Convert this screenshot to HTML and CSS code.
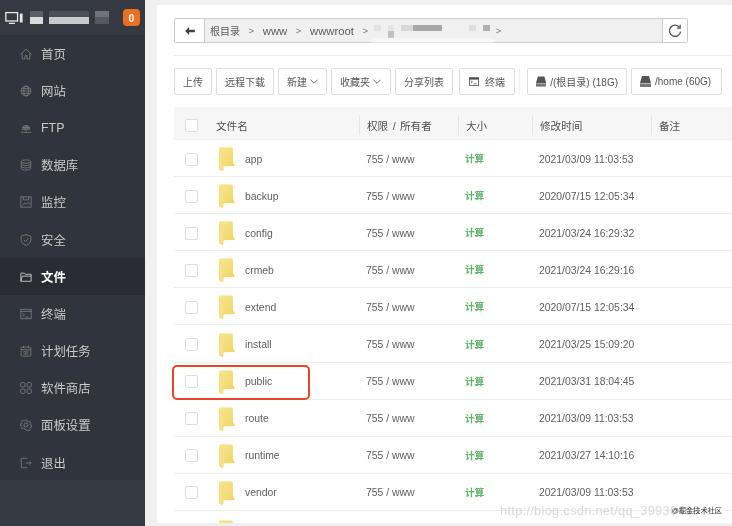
FILE: index.html
```html
<!DOCTYPE html>
<html lang="zh-CN">
<head>
<meta charset="utf-8">
<title>文件</title>
<link rel="stylesheet" href="styles.css">
</head>
<body>
<svg class="defs" width="0" height="0" aria-hidden="true">
  <defs>
    <linearGradient id="fg" x1="0" y1="0" x2="1" y2="1">
      <stop offset="0" stop-color="#f9e68f"/><stop offset="1" stop-color="#eed262"/>
    </linearGradient>
    <symbol id="folder" viewBox="0 0 16 24">
      <path d="M0 2 Q0 .3 2 .3 L12.500 .5 Q13.700 .6 13.800 1.800 L14 15 L16 19 L4.500 19.300 L4.300 22.600 Q4.200 24 2.600 23.600 L1 23 Q0 22.700 0 21.500Z" fill="url(#fg)"/>
      <path d="M4.400 19.300 L4.200 5 Q3.500 3.800 0 2 V21.500 Q0 22.700 1 23 L2.600 23.600 Q4.200 24 4.300 22.600Z" fill="#f7df85"/>
    </symbol>
  </defs>
</svg>
<div class="app">
  <aside class="sidebar">
    <header class="side-head">
      <svg class="host-icon" width="19" height="14" viewBox="0 0 20 15" fill="none" stroke="#e8e8e8" stroke-width="1.400"><rect x=".7" y="1.700" width="12.600" height="9"/><path d="M4 13.200h6.500"/><rect x="15.700" y="2.800" width="3" height="9.500" fill="#e8e8e8" stroke="none"/></svg>
      <div class="mosaic"><i class="m1"></i><i class="m2"></i><i class="m3"></i></div>
      <span class="badge">0</span>
    </header>
    <nav class="menu">
      <a class="item"><svg viewBox="0 0 14 14"><path d="M.6 7.400 7 1.200l6.400 6.200M2.600 6v6.800h3.200V9h2.400v3.800h3.200V6"/></svg>首页</a>
      <a class="item"><svg viewBox="0 0 14 14"><circle cx="7" cy="7" r="5.700"/><ellipse cx="7" cy="7" rx="2.600" ry="5.700"/><path d="M1.300 7h11.400M2 4.200h10M2 9.800h10"/></svg>网站</a>
      <a class="item"><svg viewBox="0 0 14 14"><path d="M2.500 8.500a4.500 4.500 0 0 1 9 0zM7 4V8.500M5 8.500q-1-2.500 2-4.500 3 2 2 4.500M2.700 6.500h8.600M7 8.500v3M1 12h12"/></svg>FTP</a>
      <a class="item"><svg viewBox="0 0 14 14"><ellipse cx="7" cy="3" rx="5.500" ry="2"/><path d="M1.500 3v8c0 1.100 2.500 2 5.500 2s5.500-.9 5.500-2V3M1.500 5.700c0 1.100 2.500 2 5.500 2s5.500-.9 5.500-2M1.500 8.400c0 1.100 2.500 2 5.500 2s5.500-.9 5.500-2"/></svg>数据库</a>
      <a class="item"><svg viewBox="0 0 14 14"><rect x="1" y="1" width="12" height="12"/><path d="M4 1v3.500h6V1M3 11l2.500-3 2 1.500L10 7l1.500 3"/></svg>监控</a>
      <a class="item"><svg viewBox="0 0 14 14"><path d="M7 .8 12.700 2.500V7c0 3-2.500 5.200-5.700 6.300C3.800 12.200 1.300 10 1.300 7V2.500zM4.500 6.800 6.500 8.800 9.800 5"/></svg>安全</a>
      <a class="item active"><svg viewBox="0 0 14 14"><path d="M1 2.500h4l1.200 1.300H13V12H1zM1 12l1.500-6H13"/></svg>文件</a>
      <a class="item"><svg viewBox="0 0 14 14"><rect x="1" y="1.500" width="12" height="11"/><path d="M1 4h12M3 6l2.200 2L3 10M6.500 10.500H10"/></svg>终端</a>
      <a class="item"><svg viewBox="0 0 14 14"><rect x="1.300" y="2.500" width="11.400" height="10.500" rx="1.500"/><path d="M1.300 5.500h11.400M4 1v2.500M10 1v2.500M4 8h6M4 10.500h6M7 8v2.500"/></svg>计划任务</a>
      <a class="item"><svg viewBox="0 0 14 14"><rect x=".8" y=".8" width="5" height="5" rx="1.200"/><rect x="8.200" y=".8" width="5" height="5" rx="1.200"/><rect x=".8" y="8.200" width="5" height="5" rx="1.200"/><rect x="8.200" y="8.200" width="5" height="5" rx="1.200"/></svg>软件商店</a>
      <a class="item"><svg viewBox="0 0 14 14"><circle cx="7" cy="7" r="2.300"/><path d="M6 1h2l.4 1.700 1.500.7 1.600-.8 1.300 1.500-1 1.400.5 1.500 1.700.5v2l-1.700.4-.7 1.500.9 1.500-1.500 1.300-1.400-1-1.500.5L8 13H6l-.4-1.500-1.500-.6-1.500.9-1.300-1.500 1-1.400-.6-1.500L0 7.800v-2l1.700-.3.600-1.500-.9-1.500L3 1.200l1.400 1 1.200-.5z" transform="translate(.3 .2) scale(.96)"/></svg>面板设置</a>
      <a class="item"><svg viewBox="0 0 14 14"><path d="M8.500 1.500H1.500v11h7M6.500 7H13M10.800 4.800 13 7l-2.200 2.200"/></svg>退出</a>
    </nav>
  </aside>
  <main class="content">
    <section class="panel">
      <div class="pathbar">
        <button class="back"><svg width="10" height="8" viewBox="0 0 11 9"><path d="M0 4.500 4.500 0v3H11v3H4.500v3z" fill="#444"/></svg></button>
        <div class="crumbs">
          <span class="cjk">根目录</span><b>&gt;</b><span>www</span><b>&gt;</b><span>wwwroot</span><b>&gt;</b>
          <div class="smudge"><i class="s1"></i><i class="s2"></i><i class="s3"></i><i class="s4"></i><i class="s5"></i></div>
          <b class="lastb">&gt;</b>
        </div>
        <button class="refresh"><svg width="14" height="14" viewBox="0 0 13 13" fill="none" stroke="#555" stroke-width="1.200"><path d="M10.800 3.300A5.200 5.200 0 1 0 11.700 7"/><path d="M11.300 .8v3H8.300"/></svg></button>
      </div>
      <div class="toolbar">
        <button class="btn">上传</button>
        <button class="btn">远程下载</button>
        <button class="btn">新建<svg class="caret" viewBox="0 0 9 5"><path d="M.5.500 4.500 4.500 8.500.5"/></svg></button>
        <button class="btn fav">收藏夹<svg class="caret" viewBox="0 0 9 5"><path d="M.5.500 4.500 4.500 8.500.5"/></svg></button>
        <button class="btn">分享列表</button>
        <button class="btn term"><svg width="13" height="11" viewBox="0 0 13 11" fill="none" stroke="#444"><rect x=".5" y=".5" width="12" height="10"/><path d="M.5 2h12" stroke-width="2"/><path d="M2.500 4.500 4.500 6l-2 1.500M6 8.500h3.500"/></svg>终端</button>
        <span class="sep"></span>
        <button class="btn disk root"><svg width="11" height="11" viewBox="0 0 11 11"><path d="M2 0h7l2 7H0z" fill="#555"/><rect y="7.500" width="11" height="3.500" fill="#777"/></svg>/(根目录) (18G)</button>
        <button class="btn disk home"><svg width="11" height="11" viewBox="0 0 11 11"><path d="M2 0h7l2 7H0z" fill="#555"/><rect y="7.500" width="11" height="3.500" fill="#777"/></svg>/home (60G)</button>
      </div>
      <div class="table">
        <div class="thead">
          <div class="namecell"><span class="check"></span><span class="title">文件名</span></div>
          <div class="col owner">权限 / 所有者</div>
          <div class="col">大小</div>
          <div class="col">修改时间</div>
          <div class="col">备注</div>
        </div>
        <div class="row"><div class="namecell"><span class="check"></span><svg class="folder"><use href="#folder"/></svg><span>app</span></div><div class="cell">755 / www</div><div class="cell calc">计算</div><div class="cell">2021/03/09 11:03:53</div><div></div></div>
        <div class="row"><div class="namecell"><span class="check"></span><svg class="folder"><use href="#folder"/></svg><span>backup</span></div><div class="cell">755 / www</div><div class="cell calc">计算</div><div class="cell">2020/07/15 12:05:34</div><div></div></div>
        <div class="row"><div class="namecell"><span class="check"></span><svg class="folder"><use href="#folder"/></svg><span>config</span></div><div class="cell">755 / www</div><div class="cell calc">计算</div><div class="cell">2021/03/24 16:29:32</div><div></div></div>
        <div class="row"><div class="namecell"><span class="check"></span><svg class="folder"><use href="#folder"/></svg><span>crmeb</span></div><div class="cell">755 / www</div><div class="cell calc">计算</div><div class="cell">2021/03/24 16:29:16</div><div></div></div>
        <div class="row"><div class="namecell"><span class="check"></span><svg class="folder"><use href="#folder"/></svg><span>extend</span></div><div class="cell">755 / www</div><div class="cell calc">计算</div><div class="cell">2020/07/15 12:05:34</div><div></div></div>
        <div class="row"><div class="namecell"><span class="check"></span><svg class="folder"><use href="#folder"/></svg><span>install</span></div><div class="cell">755 / www</div><div class="cell calc">计算</div><div class="cell">2021/03/25 15:09:20</div><div></div></div>
        <div class="row highlighted"><div class="namecell"><span class="check"></span><svg class="folder"><use href="#folder"/></svg><span>public</span></div><div class="cell">755 / www</div><div class="cell calc">计算</div><div class="cell">2021/03/31 18:04:45</div><div></div></div>
        <div class="row"><div class="namecell"><span class="check"></span><svg class="folder"><use href="#folder"/></svg><span>route</span></div><div class="cell">755 / www</div><div class="cell calc">计算</div><div class="cell">2021/03/09 11:03:53</div><div></div></div>
        <div class="row"><div class="namecell"><span class="check"></span><svg class="folder"><use href="#folder"/></svg><span>runtime</span></div><div class="cell">755 / www</div><div class="cell calc">计算</div><div class="cell">2021/03/27 14:10:16</div><div></div></div>
        <div class="row"><div class="namecell"><span class="check"></span><svg class="folder"><use href="#folder"/></svg><span>vendor</span></div><div class="cell">755 / www</div><div class="cell calc">计算</div><div class="cell">2021/03/09 11:03:53</div><div></div></div>
        <div class="clipped"><svg class="folder"><use href="#folder"/></svg></div>
      </div>
    </section>
    <div class="watermark"><span class="wm-url">http://blog.csdn.net/qq_39930468</span><span class="wm-tag">@掘金技术社区</span></div>
  </main>
</div>
</body>
</html>
```
FILE: styles.css
```css
* { box-sizing: border-box; }
html, body { margin: 0; height: 100%; overflow: hidden; }
body { font-family: "Liberation Sans", "Noto Sans CJK SC", sans-serif; background: #f0f0f0; color: #666; }
.defs { position: absolute; }
.app { display: flex; width: 732px; height: 526px; filter: blur(.45px); }

.sidebar { width: 145px; flex: none; background: #353a41; display: flex; flex-direction: column; }
.side-head { height: 35px; display: flex; align-items: center; padding: 0 5px 0 5px; background: #353a41; }
.host-icon { flex: none; }
.mosaic { display: flex; gap: 6px; margin-left: 6px; flex: 1; height: 13px; }
.mosaic i { display: block; height: 13px; background: linear-gradient(#5b6067 50%, #d8d9da 50%); }
.mosaic .m1 { width: 13px; }
.mosaic .m2 { width: 40px; background: linear-gradient(#4b5057 45%, #c8c9cb 45%); }
.mosaic .m3 { width: 14px; background: linear-gradient(#70747a 50%, #55595f 50%); }
.badge { width: 17px; height: 17px; border-radius: 4px; background: #ee6f21; color: #fff; font-size: 10.500px; font-weight: 700; display: flex; align-items: center; justify-content: center; }
.menu { height: 445px; background: #30353c; display: flex; flex-direction: column; }
.item { height: 37.200px; flex: none; display: flex; align-items: center; gap: 9px; padding-left: 20px; color: #c8cacc; font-size: 12.400px; }
.item svg { width: 12px; height: 12px; flex: none; fill: none; stroke: #787c81; stroke-width: 1; }
.item.active { background: #292d33; color: #fff; font-weight: 700; }
.item.active svg { stroke: #cfd0d2; }

.content { flex: 1; min-width: 0; padding: 5px 0 0 12px; position: relative; }
.panel { height: 518px; background: #fff; padding: 13px 0 0 17px; overflow: hidden; }

button { font: inherit; margin: 0; }
.pathbar { width: 514px; height: 25px; display: flex; border: 1px solid #ccc; border-radius: 2px; background: #f0f0f0; }
.back, .refresh { width: 30px; border: 0; background: #fff; padding: 0; display: flex; align-items: center; justify-content: center; flex: none; border-right: 1px solid #ccc; }
.refresh { width: 25px; border-right: 0; border-left: 1px solid #ccc; }
.crumbs { flex: 1; display: flex; align-items: center; padding-left: 5px; font-size: 11.300px; color: #5c5c5c; position: relative; }
.crumbs .cjk { font-size: 10px; }
.crumbs b { font-weight: 400; font-size: 9.500px; color: #777; margin: 0 8.600px; }
.smudge { display: flex; align-items: flex-start; gap: 7px; width: 120px; height: 23px; padding-top: 6px; margin-left: -3px; flex: none; position: relative; }
.smudge::after { content: ""; position: absolute; left: -3px; right: 0; bottom: -1px; height: 4px; background: #fff; opacity: .7; filter: blur(1.500px); }
.smudge i { display: block; height: 6px; background: #b5b5b5; flex: none; filter: blur(.6px); }
.smudge .s1 { width: 7px; background: #e2e2e2; }
.smudge .s2 { width: 6px; height: 13px; background: linear-gradient(#e4e4e4 50%, #c0c0c0 50%); }
.smudge .s3 { width: 41px; background: linear-gradient(90deg, #d8d8d8 30%, #a8a8a8 30%); }
.smudge .s4 { width: 7px; margin-left: 20px; background: #dedede; }
.smudge .s5 { width: 7px; background: #b0b0b0; }
.crumbs .lastb { margin: 0 0 0 2px; }

.toolbar { margin-top: 12px; padding-top: 12px; border-top: 1px solid #ececec; width: 558px; display: flex; align-items: center; gap: 4px; height: 40px; }
.btn { height: 27px; border: 1px solid #ddd; border-radius: 2px; background: #fff; color: #555; font-size: 10px; padding: 0 8px; display: flex; align-items: center; gap: 3px; white-space: nowrap; flex: none; }
.caret { width: 8px; height: 5px; fill: none; stroke: #555; }
.fav { width: 60px; }
.term { margin-left: 2px; gap: 6px; padding: 0 9px; width: 56px; }
.sep { width: 1px; height: 27px; background: #eee; margin: 0 3px 0 0; flex: none; }
.disk { gap: 4px; padding: 0 8px; font-size: 10px; }
.root { width: 100px; }
.home { width: 91px; }

.table { margin-top: 12px; width: 558px; font-size: 10.400px; }
.thead, .row { display: grid; grid-template-columns: 185px 99px 74px 119px 81px; align-items: center; }
.thead { height: 33px; padding-top: 4px; background: #f6f6f6; border-bottom: 1px solid #eee; color: #4f4f4f; font-size: 10.600px; }
.col { height: 20px; border-left: 1px solid #e6e6e6; padding-left: 7px; line-height: 22px; }
.owner { word-spacing: 1.500px; }
.namecell { display: flex; align-items: center; padding-left: 11px; white-space: nowrap; }
.check { width: 13px; height: 13px; border: 1px solid #ddd; border-radius: 2px; background: #fff; flex: none; }
.title { margin-left: 18px; }
.row { height: 37.100px; padding-top: 2px; border-bottom: 1px solid #eee; color: #5e5e5e; }
.cell { padding-left: 7px; white-space: nowrap; }
.calc { color: #5fb567; font-weight: 700; font-size: 9.600px; padding-bottom: 2px; }
.folder { width: 16px; height: 24px; margin: 0 10px 0 21px; flex: none; }
.highlighted { position: relative; }
.highlighted::before { content: ""; position: absolute; left: -2px; top: 2px; width: 134px; height: 31px; border: 2px solid #e8452c; border-radius: 5px; }
.clipped { height: 30px; padding: 9px 0 0 11px; margin-left: 13px; overflow: hidden; }

.watermark { position: absolute; left: 355px; top: 503px; width: 232px; height: 15px; }
.wm-url { display: block; font-size: 12.800px; color: #d9d9d9; letter-spacing: .3px; white-space: nowrap; }
.wm-tag { position: absolute; right: 10px; top: 2px; font-size: 7.200px; color: #333; white-space: nowrap; }
```
